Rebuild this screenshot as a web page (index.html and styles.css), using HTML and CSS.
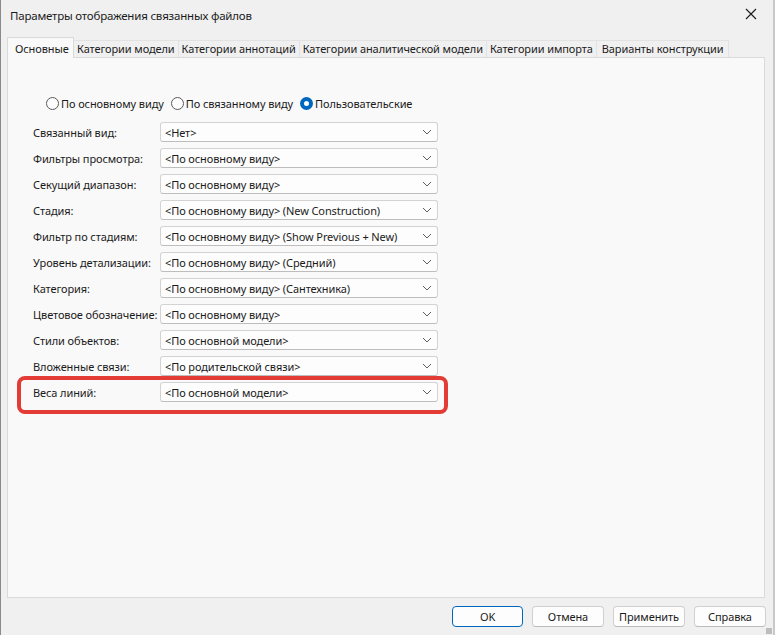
FILE: index.html
```html
<!DOCTYPE html>
<html lang="ru">
<head>
<meta charset="utf-8">
<title>Параметры отображения связанных файлов</title>
<link rel="stylesheet" href="styles.css">
</head>
<body>
<div class="window">
  <div class="titlebar">
    <span class="title">Параметры отображения связанных файлов</span>
    <svg class="close" width="12" height="12" viewBox="0 0 12 12"><path d="M1 1 L11 11 M11 1 L1 11" stroke="#1a1a1a" stroke-width="1.1" fill="none"/></svg>
  </div>
  <div class="tabs">
    <div class="tab active">Основные</div>
    <div class="tab">Категории модели</div>
    <div class="tab">Категории аннотаций</div>
    <div class="tab">Категории аналитической модели</div>
    <div class="tab">Категории импорта</div>
    <div class="tab last">Варианты конструкции</div>
  </div>
  <div class="panel">
    <div class="radios">
      <label class="radio"><span class="dot"></span>По основному виду</label>
      <label class="radio"><span class="dot"></span>По связанному виду</label>
      <label class="radio"><span class="dot checked"></span>Пользовательские</label>
    </div>
    <div class="form">
      <div class="row"><span class="lbl">Связанный вид:</span><div class="combo"><span>&lt;Нет&gt;</span><svg class="chev" width="10" height="6" viewBox="0 0 10 6"><path d="M1 1 L5 5 L9 1" stroke="#5f5f5f" fill="none"/></svg></div></div>
      <div class="row"><span class="lbl">Фильтры просмотра:</span><div class="combo"><span>&lt;По основному виду&gt;</span><svg class="chev" width="10" height="6" viewBox="0 0 10 6"><path d="M1 1 L5 5 L9 1" stroke="#5f5f5f" fill="none"/></svg></div></div>
      <div class="row"><span class="lbl">Секущий диапазон:</span><div class="combo"><span>&lt;По основному виду&gt;</span><svg class="chev" width="10" height="6" viewBox="0 0 10 6"><path d="M1 1 L5 5 L9 1" stroke="#5f5f5f" fill="none"/></svg></div></div>
      <div class="row"><span class="lbl">Стадия:</span><div class="combo"><span>&lt;По основному виду&gt; (New Construction)</span><svg class="chev" width="10" height="6" viewBox="0 0 10 6"><path d="M1 1 L5 5 L9 1" stroke="#5f5f5f" fill="none"/></svg></div></div>
      <div class="row"><span class="lbl">Фильтр по стадиям:</span><div class="combo"><span>&lt;По основному виду&gt; (Show Previous + New)</span><svg class="chev" width="10" height="6" viewBox="0 0 10 6"><path d="M1 1 L5 5 L9 1" stroke="#5f5f5f" fill="none"/></svg></div></div>
      <div class="row"><span class="lbl">Уровень детализации:</span><div class="combo"><span>&lt;По основному виду&gt; (Средний)</span><svg class="chev" width="10" height="6" viewBox="0 0 10 6"><path d="M1 1 L5 5 L9 1" stroke="#5f5f5f" fill="none"/></svg></div></div>
      <div class="row"><span class="lbl">Категория:</span><div class="combo"><span>&lt;По основному виду&gt; (Сантехника)</span><svg class="chev" width="10" height="6" viewBox="0 0 10 6"><path d="M1 1 L5 5 L9 1" stroke="#5f5f5f" fill="none"/></svg></div></div>
      <div class="row"><span class="lbl">Цветовое обозначение:</span><div class="combo"><span>&lt;По основному виду&gt;</span><svg class="chev" width="10" height="6" viewBox="0 0 10 6"><path d="M1 1 L5 5 L9 1" stroke="#5f5f5f" fill="none"/></svg></div></div>
      <div class="row"><span class="lbl">Стили объектов:</span><div class="combo"><span>&lt;По основной модели&gt;</span><svg class="chev" width="10" height="6" viewBox="0 0 10 6"><path d="M1 1 L5 5 L9 1" stroke="#5f5f5f" fill="none"/></svg></div></div>
      <div class="row"><span class="lbl">Вложенные связи:</span><div class="combo"><span>&lt;По родительской связи&gt;</span><svg class="chev" width="10" height="6" viewBox="0 0 10 6"><path d="M1 1 L5 5 L9 1" stroke="#5f5f5f" fill="none"/></svg></div></div>
      <div class="row highlight"><span class="lbl">Веса линий:</span><div class="combo"><span>&lt;По основной модели&gt;</span><svg class="chev" width="10" height="6" viewBox="0 0 10 6"><path d="M1 1 L5 5 L9 1" stroke="#5f5f5f" fill="none"/></svg></div></div>
    </div>
  </div>
  <div class="buttons">
    <button class="btn primary">OK</button>
    <button class="btn">Отмена</button>
    <button class="btn">Применить</button>
    <button class="btn">Справка</button>
  </div>
  <div class="grip"></div>
</div>
</body>
</html>
```

FILE: styles.css
```css
html, body {
  margin: 0;
  padding: 0;
  background: #f0f0f0;
}
body {
  width: 775px;
  height: 635px;
  overflow: hidden;
  font-family: "Noto Sans", "Liberation Sans", sans-serif;
  font-size: 11px;
  letter-spacing: -0.1px;
  color: #1b1b1b;
}
.window {
  position: relative;
  box-sizing: border-box;
  width: 775px;
  height: 635px;
  border-left: 1px solid #8a8a8a;
  border-right: 2px solid #c8c8c8;
  display: flex;
  flex-direction: column;
}
.titlebar {
  height: 32px;
  display: flex;
  align-items: center;
  justify-content: space-between;
  padding: 0 16px 0 9px;
  box-sizing: border-box;
}
.title {
  font-size: 11.5px;
  letter-spacing: -0.2px;
  margin-top: -1px;
}
.close {
  margin-top: -4px;
}
.tabs {
  display: flex;
  align-items: flex-end;
  height: 20px;
  margin-left: 6px;
  margin-top: 5px;
}
.tab {
  height: 17px;
  line-height: 16px;
  padding: 0 3px;
  border: 1px solid #e2e2e2;
  border-bottom: none;
  border-left: none;
  background: #f0f0f0;
  white-space: nowrap;
  box-sizing: border-box;
}
.tab.last {
  padding: 0 5px;
}
.tab.active {
  height: 21px;
  line-height: 22px;
  background: #f9f9f9;
  border: 1px solid #dadada;
  border-bottom: none;
  padding: 0 6px 0 7px;
  margin-bottom: -1px;
  position: relative;
  z-index: 2;
  width: 67px;
}
.panel {
  box-sizing: border-box;
  margin: 0 8px 0 6px;
  height: 541px;
  background: #f9f9f9;
  border: 1px solid #dadada;
  position: relative;
  z-index: 1;
}
.radios {
  display: flex;
  align-items: center;
  margin-top: 37px;
  padding-left: 38px;
  height: 16px;
}
.radio {
  display: flex;
  align-items: center;
  margin-right: 7px;
}
.dot {
  box-sizing: border-box;
  width: 13px;
  height: 13px;
  border-radius: 50%;
  border: 1px solid #5a5a5a;
  background: #fdfdfd;
  margin-right: 2px;
}
.dot.checked {
  border: 4px solid #0067c0;
  background: #ffffff;
}
.form {
  margin-top: 11px;
  padding-left: 25px;
  display: flex;
  flex-direction: column;
  gap: 6px;
}
.row {
  display: flex;
  align-items: center;
  height: 20px;
  position: relative;
}
.lbl {
  width: 127px;
  white-space: nowrap;
}
.combo {
  box-sizing: border-box;
  width: 278px;
  height: 20px;
  border: 1px solid #d3d3d3;
  border-bottom-color: #bdbdbd;
  border-radius: 3px;
  background: #fdfdfd;
  display: flex;
  align-items: center;
  justify-content: space-between;
  padding: 0 4px 0 4px;
  white-space: nowrap;
}
.chev {
  margin-right: 1px;
}
.highlight::after {
  content: "";
  position: absolute;
  left: -16px;
  top: -6px;
  width: 431px;
  height: 38px;
  box-sizing: border-box;
  border: 4px solid #e33b35;
  border-radius: 8px;
  pointer-events: none;
}
.buttons {
  display: flex;
  justify-content: flex-end;
  gap: 9px;
  margin-top: 8px;
  padding-right: 7px;
}
.btn {
  box-sizing: border-box;
  width: 72px;
  height: 21px;
  border: 1px solid #d0d0d0;
  border-bottom-color: #bcbcbc;
  border-radius: 4px;
  background: #fdfdfd;
  font-family: "Noto Sans", "Liberation Sans", sans-serif;
  font-size: 11px;
  letter-spacing: -0.1px;
  color: #1b1b1b;
  padding: 0;
}
.btn.primary {
  width: 71px;
  border: 1px solid #0067c0;
}
.grip {
  position: absolute;
  right: 1px;
  bottom: 1px;
  width: 6px;
  height: 6px;
  background: radial-gradient(circle, #a0a0a0 0.6px, transparent 0.9px) 0 0 / 2px 2px;
}
```
